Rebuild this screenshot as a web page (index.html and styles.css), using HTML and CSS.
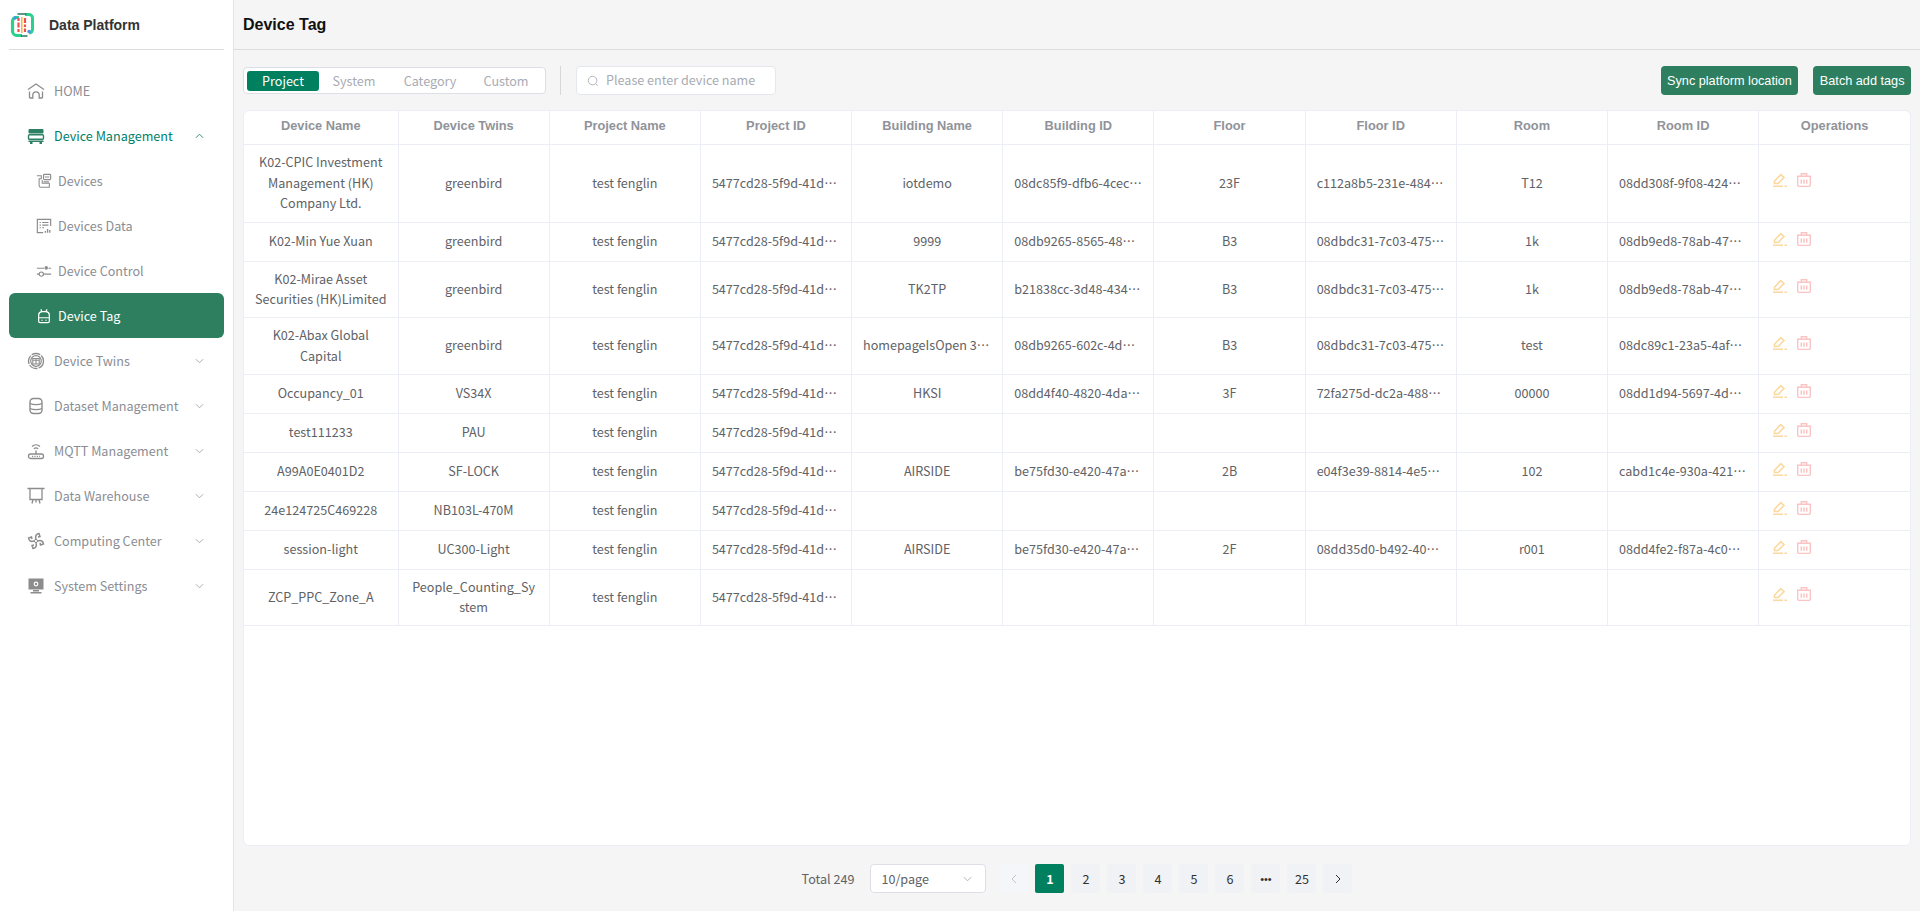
FILE: index.html
```html
<!DOCTYPE html>
<html lang="en">
<head>
    <meta charset="UTF-8">
    <title>Device Tag</title>
    <link rel="stylesheet" href="styles.css">
</head>
<body>
    <svg class="sprite" xmlns="http://www.w3.org/2000/svg">
        <symbol id="i-edit" viewBox="0 0 14 14">
            <path d="M1.5 8.3 7.8 1.6l3.2 2.9-5.9 6H1.5z" fill="none" stroke="currentColor" stroke-width="1.6"/>
            <path d="M0 13.2h10M11.5 13.2H14" stroke="currentColor" stroke-width="1.4"/>
        </symbol>
        <symbol id="i-del" viewBox="0 0 14 14">
            <path d="M.7 3.2h12.6V12a1.4 1.4 0 0 1-1.4 1.4H2.1A1.4 1.4 0 0 1 .7 12z" fill="none" stroke="currentColor" stroke-width="1.4"/>
            <path d="M4.3 3.2V.8h5.4v2.4" fill="none" stroke="currentColor" stroke-width="1.4"/>
            <path d="M4.3 6.5v4.2M7 6.5v4.2M9.7 6.5v4.2" stroke="currentColor" stroke-width="1.5"/>
        </symbol>
    </svg>

    <div class="app">
        <aside class="sidebar">
            <div class="brand">
                <svg class="logo" viewBox="0 0 24 24">
                    <path d="M9 4.5H6A3.5 3.5 0 0 0 2.5 8v10A4.500 4.500 0 0 0 7 22.5h5" fill="none" stroke="#2bd08d" stroke-width="3.2"/>
                    <path d="M15 1.5h4A3.500 3.500 0 0 1 22.5 5v11a4 4 0 0 1-3.5 4" fill="none" stroke="#2bd08d" stroke-width="3"/>
                    <path d="M7.5 1h9M11 23h6.5" stroke="#24795f" stroke-width="1.6"/>
                    <path d="M8.5 5v3M8.5 9.5v5M8.5 16v3M15 5v5M15 11.5V14M15 15.5V19" stroke="#ef4f4f" stroke-width="2.2"/>
                    <path d="M11.8 4v16" stroke="#f6b73c" stroke-width="1.5"/>
                    <circle cx="5" cy="5" r="1.7" fill="#4a90f0"/>
                    <circle cx="19" cy="18.5" r="1.7" fill="#4a90f0"/>
                </svg>
                <span class="brand-name">Data Platform</span>
            </div>
            <nav class="menu">
                <a class="menu-item">
                    <svg class="menu-icon" viewBox="0 0 18 18"><path d="M1 7.5 9 2l8 5.5" fill="none" stroke="currentColor" stroke-width="1.2"/><path d="M2.5 16V9.5M15.5 16V9.5M2.5 16h3.3v-3a3.2 3.2 0 0 1 6.4 0v3h3.3" fill="none" stroke="currentColor" stroke-width="1.3"/></svg>
                    <span>HOME</span>
                </a>
                <a class="menu-item is-open">
                    <svg class="menu-icon" viewBox="0 0 18 18"><rect x="1.5" y="2" width="15" height="4.5" rx="1" fill="currentColor"/><rect x="1.5" y="7.8" width="15" height="4.5" rx="1" fill="none" stroke="currentColor" stroke-width="1.4"/><path d="M1.5 13.5h15V15h-15zM3 15h2.5v2H3zM12.5 15H15v2h-2.5z" fill="currentColor"/></svg>
                    <span>Device Management</span>
                    <svg class="chevron" viewBox="0 0 10 6"><path d="M1 5 5 1l4 4" fill="none" stroke="currentColor"/></svg>
                </a>
                <a class="menu-item sub">
                    <svg class="menu-icon" viewBox="0 0 18 18"><path d="M1 3h5v3.5H3.5V14a2 2 0 0 0 2 2H15v-4.500H7V8" fill="none" stroke="currentColor" stroke-width="1.2"/><rect x="8.5" y="1.5" width="8" height="6" rx="1" fill="none" stroke="currentColor" stroke-width="1.3"/><path d="M10 4.5h5M8.5 10h6" stroke="currentColor" stroke-width="1.2"/></svg>
                    <span>Devices</span>
                </a>
                <a class="menu-item sub">
                    <svg class="menu-icon" viewBox="0 0 18 18"><path d="M8 16.5H1.5v-15h15V9" fill="none" stroke="currentColor" stroke-width="1.3"/><path d="M4 5h1.5M7 5h7M4 8h1.5M7 8h7M4 11h1.5M7 11h2" stroke="currentColor" stroke-width="1.2"/><path d="M10.5 16.5v-2M13 16.5v-4M15.5 16.5v-3" stroke="currentColor" stroke-width="1.5"/></svg>
                    <span>Devices Data</span>
                </a>
                <a class="menu-item sub">
                    <svg class="menu-icon" viewBox="0 0 18 18"><path d="M1 6h8M14 6h3M1 12.5h2.500M9 12.5h8" stroke="currentColor" stroke-width="1.2"/><circle cx="11.5" cy="5.5" r="2" fill="currentColor"/><circle cx="6" cy="12.5" r="2.4" fill="none" stroke="currentColor" stroke-width="1.3"/></svg>
                    <span>Device Control</span>
                </a>
                <a class="menu-item sub is-active">
                    <svg class="menu-icon" viewBox="0 0 18 18"><path d="M3 7.5A4 4 0 0 1 7 4h4a4 4 0 0 1 4 3.5V15a1.5 1.5 0 0 1-1.5 1.5h-9A1.5 1.5 0 0 1 3 15z" fill="none" stroke="currentColor" stroke-width="1.4"/><path d="M3 11h12M6.5 4l-1-2.500M11 4l1.5-2.500M6 13.800h1.500M10.500 13.800H12" stroke="currentColor" stroke-width="1.3"/></svg>
                    <span>Device Tag</span>
                </a>
                <a class="menu-item">
                    <svg class="menu-icon" viewBox="0 0 18 18"><circle cx="9" cy="9" r="7.5" fill="none" stroke="currentColor" stroke-width="1.3" stroke-dasharray="9 1.2"/><circle cx="9" cy="9" r="5.3" fill="none" stroke="currentColor" stroke-width="1.2"/><path d="M5.8 6.5h6.4V12H5.800zM9 6.5V12M5.8 8.3h6.4" fill="none" stroke="currentColor" stroke-width="1.1"/></svg>
                    <span>Device Twins</span>
                    <svg class="chevron" viewBox="0 0 10 6"><path d="m1 1 4 4 4-4" fill="none" stroke="currentColor"/></svg>
                </a>
                <a class="menu-item">
                    <svg class="menu-icon" viewBox="0 0 18 18"><rect x="3" y="1.5" width="12" height="15" rx="3.5" fill="none" stroke="currentColor" stroke-width="1.4"/><path d="M3 6.5c3 1.5 9 1.5 12 0M3 11.5c3 1.500 9 1.500 12 0" fill="none" stroke="currentColor" stroke-width="1.3"/></svg>
                    <span>Dataset Management</span>
                    <svg class="chevron" viewBox="0 0 10 6"><path d="m1 1 4 4 4-4" fill="none" stroke="currentColor"/></svg>
                </a>
                <a class="menu-item">
                    <svg class="menu-icon" viewBox="0 0 18 18"><path d="M5 4.5a6 6 0 0 1 8 0M6.8 6.8a3.5 3.5 0 0 1 4.4 0" fill="none" stroke="currentColor" stroke-width="1.2"/><path d="M8.3 8.500h1.400V12H8.300z" fill="currentColor"/><rect x="1.5" y="12" width="15" height="4.5" rx="2" fill="none" stroke="currentColor" stroke-width="1.3"/><path d="M5 14.3h8" stroke="currentColor" stroke-width="1.2" stroke-dasharray="1.2 1.2"/></svg>
                    <span>MQTT Management</span>
                    <svg class="chevron" viewBox="0 0 10 6"><path d="m1 1 4 4 4-4" fill="none" stroke="currentColor"/></svg>
                </a>
                <a class="menu-item">
                    <svg class="menu-icon" viewBox="0 0 18 18"><path d="M.5 1.5h17M3 1.5v11h12v-11M6 12.5l-1 4M12 12.5l1 4M9 12.5v3" fill="none" stroke="currentColor" stroke-width="1.3"/></svg>
                    <span>Data Warehouse</span>
                    <svg class="chevron" viewBox="0 0 10 6"><path d="m1 1 4 4 4-4" fill="none" stroke="currentColor"/></svg>
                </a>
                <a class="menu-item">
                    <svg class="menu-icon" viewBox="0 0 18 18"><path d="M9 7C8 4 9 2 12 1.5l1 3-2 .5M11 9c3-1 5 0 5.5 3l-3 1-.5-2M9 11c1 3 0 5-3 5.5l-1-3 2-.5M7 9C4 10 2 9 1.5 6l3-1 .5 2" fill="none" stroke="currentColor" stroke-width="1.5"/><circle cx="9" cy="9" r="1.6" fill="none" stroke="currentColor"/></svg>
                    <span>Computing Center</span>
                    <svg class="chevron" viewBox="0 0 10 6"><path d="m1 1 4 4 4-4" fill="none" stroke="currentColor"/></svg>
                </a>
                <a class="menu-item">
                    <svg class="menu-icon" viewBox="0 0 18 18"><path d="M1.5 1.5h15v11h-15z" fill="currentColor"/><circle cx="9" cy="7" r="1.8" fill="none" stroke="#fff" stroke-width="1.2"/><path d="M6 13h6v1.5H6zM3.5 15h11v1.5h-11z" fill="currentColor"/></svg>
                    <span>System Settings</span>
                    <svg class="chevron" viewBox="0 0 10 6"><path d="m1 1 4 4 4-4" fill="none" stroke="currentColor"/></svg>
                </a>
            </nav>
        </aside>

        <main class="main">
            <header class="topbar"><h1>Device Tag</h1></header>

            <div class="toolbar">
                <div class="tabs">
                    <span class="tab is-active">Project</span>
                    <span class="tab">System</span>
                    <span class="tab">Category</span>
                    <span class="tab">Custom</span>
                </div>
                <span class="divider"></span>
                <div class="search">
                    <svg viewBox="0 0 14 14"><circle cx="6.5" cy="6.5" r="5" fill="none" stroke="currentColor"/><path d="m10 10 2.5 2.5" stroke="currentColor"/></svg>
                    <span class="placeholder">Please enter device name</span>
                </div>
                <div class="actions">
                    <button class="btn" type="button">Sync platform location</button>
                    <button class="btn" type="button">Batch add tags</button>
                </div>
            </div>

            <div class="table-card">
                <table class="tag-table">
                    <colgroup><col class="col-first"></colgroup>
                    <thead>
                        <tr>
                            <th>Device Name</th><th>Device Twins</th><th>Project Name</th><th>Project ID</th><th>Building Name</th><th>Building ID</th><th>Floor</th><th>Floor ID</th><th>Room</th><th>Room ID</th><th>Operations</th>
                        </tr>
                    </thead>
                    <tbody>
                        <tr class="row-tall">
                            <td>K02-CPIC Investment Management (HK) Company Ltd.</td><td>greenbird</td><td>test fenglin</td><td><div class="ell">5477cd28-5f9d-41d3-8a15-6c2e90b7d104</div></td><td><div class="ell">iotdemo</div></td><td><div class="ell">08dc85f9-dfb6-4cec-8a11-52cf01e7a390</div></td><td>23F</td><td><div class="ell">c112a8b5-231e-4842-b7d0-93ac14e6f027</div></td><td>T12</td><td><div class="ell">08dd308f-9f08-4242-8c3e-71b06d2fa418</div></td>
                            <td class="ops"><svg class="op op-edit"><use href="#i-edit"/></svg><svg class="op op-del"><use href="#i-del"/></svg></td>
                        </tr>
                        <tr>
                            <td>K02-Min Yue Xuan</td><td>greenbird</td><td>test fenglin</td><td><div class="ell">5477cd28-5f9d-41d3-8a15-6c2e90b7d104</div></td><td><div class="ell">9999</div></td><td><div class="ell">08db9265-8565-48d1-8f40-2a7d13c9b650</div></td><td>B3</td><td><div class="ell">08dbdc31-7c03-4750-8d92-6e0fb14a37c8</div></td><td>1k</td><td><div class="ell">08db9ed8-78ab-47c5-81f6-0d3e92ab6c17</div></td>
                            <td class="ops"><svg class="op op-edit"><use href="#i-edit"/></svg><svg class="op op-del"><use href="#i-del"/></svg></td>
                        </tr>
                        <tr>
                            <td>K02-Mirae Asset Securities (HK)Limited</td><td>greenbird</td><td>test fenglin</td><td><div class="ell">5477cd28-5f9d-41d3-8a15-6c2e90b7d104</div></td><td><div class="ell">TK2TP</div></td><td><div class="ell">b21838cc-3d48-4341-a0e7-58fd26c1b903</div></td><td>B3</td><td><div class="ell">08dbdc31-7c03-4750-8d92-6e0fb14a37c8</div></td><td>1k</td><td><div class="ell">08db9ed8-78ab-47c5-81f6-0d3e92ab6c17</div></td>
                            <td class="ops"><svg class="op op-edit"><use href="#i-edit"/></svg><svg class="op op-del"><use href="#i-del"/></svg></td>
                        </tr>
                        <tr>
                            <td>K02-Abax Global Capital</td><td>greenbird</td><td>test fenglin</td><td><div class="ell">5477cd28-5f9d-41d3-8a15-6c2e90b7d104</div></td><td><div class="ell">homepageIsOpen 3 building</div></td><td><div class="ell">08db9265-602c-4db7-8b36-c4e07a19d25f</div></td><td>B3</td><td><div class="ell">08dbdc31-7c03-4750-8d92-6e0fb14a37c8</div></td><td>test</td><td><div class="ell">08dc89c1-23a5-4af0-96d2-1b7e30c8f465</div></td>
                            <td class="ops"><svg class="op op-edit"><use href="#i-edit"/></svg><svg class="op op-del"><use href="#i-del"/></svg></td>
                        </tr>
                        <tr>
                            <td>Occupancy_01</td><td>VS34X</td><td>test fenglin</td><td><div class="ell">5477cd28-5f9d-41d3-8a15-6c2e90b7d104</div></td><td><div class="ell">HKSI</div></td><td><div class="ell">08dd4f40-4820-4da6-8e73-f1290cb5a684</div></td><td>3F</td><td><div class="ell">72fa275d-dc2a-4881-a5c4-07e3d96b1f28</div></td><td>00000</td><td><div class="ell">08dd1d94-5697-4d2b-8c01-e65f3a70b9d2</div></td>
                            <td class="ops"><svg class="op op-edit"><use href="#i-edit"/></svg><svg class="op op-del"><use href="#i-del"/></svg></td>
                        </tr>
                        <tr>
                            <td>test111233</td><td>PAU</td><td>test fenglin</td><td><div class="ell">5477cd28-5f9d-41d3-8a15-6c2e90b7d104</div></td><td></td><td></td><td></td><td></td><td></td><td></td>
                            <td class="ops"><svg class="op op-edit"><use href="#i-edit"/></svg><svg class="op op-del"><use href="#i-del"/></svg></td>
                        </tr>
                        <tr>
                            <td>A99A0E0401D2</td><td>SF-LOCK</td><td>test fenglin</td><td><div class="ell">5477cd28-5f9d-41d3-8a15-6c2e90b7d104</div></td><td><div class="ell">AIRSIDE</div></td><td><div class="ell">be75fd30-e420-47ac-93b8-d10f6a2c7e45</div></td><td>2B</td><td><div class="ell">e04f3e39-8814-4e5a-b16c-3790cd28fa61</div></td><td>102</td><td><div class="ell">cabd1c4e-930a-4213-8fe7-a264b05d19c3</div></td>
                            <td class="ops"><svg class="op op-edit"><use href="#i-edit"/></svg><svg class="op op-del"><use href="#i-del"/></svg></td>
                        </tr>
                        <tr>
                            <td>24e124725C469228</td><td>NB103L-470M</td><td>test fenglin</td><td><div class="ell">5477cd28-5f9d-41d3-8a15-6c2e90b7d104</div></td><td></td><td></td><td></td><td></td><td></td><td></td>
                            <td class="ops"><svg class="op op-edit"><use href="#i-edit"/></svg><svg class="op op-del"><use href="#i-del"/></svg></td>
                        </tr>
                        <tr>
                            <td>session-light</td><td>UC300-Light</td><td>test fenglin</td><td><div class="ell">5477cd28-5f9d-41d3-8a15-6c2e90b7d104</div></td><td><div class="ell">AIRSIDE</div></td><td><div class="ell">be75fd30-e420-47ac-93b8-d10f6a2c7e45</div></td><td>2F</td><td><div class="ell">08dd35d0-b492-40d7-86ad-5c1e29073bd6</div></td><td>r001</td><td><div class="ell">08dd4fe2-f87a-4c03-9b15-e8d27f60a1c4</div></td>
                            <td class="ops"><svg class="op op-edit"><use href="#i-edit"/></svg><svg class="op op-del"><use href="#i-del"/></svg></td>
                        </tr>
                        <tr>
                            <td>ZCP_PPC_Zone_A</td><td>People_Counting_System</td><td>test fenglin</td><td><div class="ell">5477cd28-5f9d-41d3-8a15-6c2e90b7d104</div></td><td></td><td></td><td></td><td></td><td></td><td></td>
                            <td class="ops"><svg class="op op-edit"><use href="#i-edit"/></svg><svg class="op op-del"><use href="#i-del"/></svg></td>
                        </tr>
                    </tbody>
                </table>
            </div>

            <footer class="pager">
                <span class="total">Total 249</span>
                <div class="page-size">
                    <span>10/page</span>
                    <svg class="chevron" viewBox="0 0 10 6"><path d="m1 1 4 4 4-4" fill="none" stroke="currentColor"/></svg>
                </div>
                <ul class="pages">
                    <li class="is-disabled"><svg viewBox="0 0 6 10"><path d="M5 1 1 5l4 4" fill="none" stroke="currentColor"/></svg></li>
                    <li class="is-active">1</li>
                    <li>2</li>
                    <li>3</li>
                    <li>4</li>
                    <li>5</li>
                    <li>6</li>
                    <li class="more">•••</li>
                    <li>25</li>
                    <li><svg viewBox="0 0 6 10"><path d="m1 1 4 4-4 4" fill="none" stroke="currentColor"/></svg></li>
                </ul>
            </footer>
        </main>
    </div>
</body>
</html>
```

FILE: styles.css
```css
* {
    box-sizing: border-box;
}

html, body {
    height: 100%;
}

body {
    margin: 0;
    font-family: "Noto Sans CJK SC", "Noto Sans", sans-serif;
    font-size: 12.6px;
    color: #606266;
    background-color: #f5f5f5;
    overflow: hidden;
}

.sprite {
    display: none;
}

.app {
    display: flex;
    height: 100%;
}

/* sidebar */
.sidebar {
    width: 234px;
    flex-shrink: 0;
    background-color: #fff;
    border-right: 1px solid #e4e4e4;
    padding: 0 9px;
}

.brand {
    display: flex;
    align-items: center;
    height: 50px;
    border-bottom: 1px solid #dcdcdc;
    padding-left: 1px;
}

.logo {
    width: 24px;
    height: 24px;
    flex-shrink: 0;
}

.brand-name {
    margin-left: 15px;
    font-family: "Liberation Sans", Arial, sans-serif;
    font-size: 14px;
    font-weight: 700;
    color: #333;
}

.menu {
    margin-top: 18px;
}

.menu-item {
    display: flex;
    align-items: center;
    height: 45px;
    padding-left: 18px;
    color: #8a8d94;
    border-radius: 6px;
}

.menu-icon {
    width: 18px;
    height: 18px;
    margin-right: 9px;
    flex-shrink: 0;
    color: #8c8c8c;
}

.menu-item .chevron {
    margin-left: auto;
    margin-right: 20px;
    color: #a0a3a8;
}

.chevron {
    width: 9px;
    height: 6px;
}

.menu-item.is-open {
    color: #00806a;
}

.menu-item.is-open .menu-icon,
.menu-item.is-open .chevron {
    color: #2e8065;
}

.menu-item.sub {
    padding-left: 27px;
}

.menu-item.sub .menu-icon {
    width: 16px;
    height: 16px;
    margin-right: 6px;
}

.menu-item.is-active {
    background-color: #2e7f5f;
    color: #fff;
}

.menu-item.is-active .menu-icon {
    color: #fff;
}

/* main area */
.main {
    flex: 1;
    min-width: 0;
    display: flex;
    flex-direction: column;
}

.topbar {
    height: 50px;
    flex-shrink: 0;
    display: flex;
    align-items: center;
    padding-left: 9px;
    border-bottom: 1px solid #dcdcdc;
}

.topbar h1 {
    margin: 0;
    font-family: "Liberation Sans", Arial, sans-serif;
    font-size: 16px;
    font-weight: 700;
    color: #111;
}

.toolbar {
    display: flex;
    align-items: center;
    height: 29px;
    flex-shrink: 0;
    margin: 16px 9px 15px;
}

.tabs {
    display: flex;
    align-items: center;
    width: 303px;
    height: 27px;
    padding: 0 3px;
    background-color: #fff;
    border: 1px solid #dcdfe6;
    border-radius: 4px;
}

.tab {
    width: 76px;
    height: 20px;
    padding-right: 6px;
    line-height: 20px;
    text-align: center;
    color: #a8abb2;
    border-radius: 3px;
}

.tab:last-child {
    width: 70px;
    padding-right: 0;
}

.tab.is-active {
    width: 72px;
    padding-right: 0;
    background-color: #00805f;
    color: #fff;
}

.divider {
    width: 1px;
    height: 29px;
    margin: 0 15px 0 14px;
    background-color: #d8d8d8;
}

.search {
    display: flex;
    align-items: center;
    width: 200px;
    height: 29px;
    padding-left: 10px;
    background-color: #fff;
    border: 1px solid #e4e7ed;
    border-radius: 4px;
    color: #a8abb2;
}

.search svg {
    width: 12px;
    height: 12px;
    margin-right: 7px;
}

.placeholder {
    padding-bottom: 2px;
}

.actions {
    margin-left: auto;
    display: flex;
    gap: 15px;
}

.btn {
    height: 29px;
    padding: 0 6.5px;
    font-family: "Liberation Sans", Arial, sans-serif;
    font-size: 12.7px;
    color: #fff;
    background-color: #2e7f5f;
    border: none;
    border-radius: 4px;
}

/* table */
.table-card {
    flex: 1;
    min-height: 0;
    margin: 0 9px;
    background-color: #fff;
    border: 1px solid #ebeef5;
    border-radius: 6px;
    overflow: hidden;
}

.tag-table {
    width: 100%;
    table-layout: fixed;
    border-collapse: collapse;
}

.col-first {
    width: 154px;
}

.tag-table th {
    height: 33px;
    padding: 0 10px 3px;
    font-family: "Liberation Sans", Arial, sans-serif;
    font-size: 12.8px;
    font-weight: 700;
    color: #909399;
    border-right: 1px solid #ebeef5;
    border-bottom: 1px solid #ebeef5;
}

.tag-table td {
    height: 39px;
    padding: 7px 12px;
    line-height: 20.8px;
    text-align: center;
    overflow-wrap: anywhere;
    border-right: 1px solid #ebeef5;
    border-bottom: 1px solid #ebeef5;
}

.tag-table td:first-child {
    padding: 7px 10px;
}

.tag-table .row-tall td {
    height: 78px;
}

.tag-table th:last-child,
.tag-table td:last-child {
    border-right: none;
}

/* ids run a little wider than wrapped text before they get cut */
.ell {
    margin: 0 -1px;
    white-space: nowrap;
    overflow: hidden;
    text-overflow: ellipsis;
}

.tag-table td.ops {
    padding: 0 0 6px 14px;
    text-align: left;
    line-height: 0;
}

.op {
    width: 14px;
    height: 14px;
}

.op-edit {
    color: #fbd89f;
    margin-right: 10px;
}

.op-del {
    color: #fbc4c4;
}

/* pagination */
.pager {
    height: 65px;
    flex-shrink: 0;
    display: flex;
    align-items: center;
    justify-content: center;
}

.total {
    margin-right: 16px;
}

.page-size {
    display: flex;
    align-items: center;
    justify-content: space-between;
    width: 116px;
    height: 29px;
    padding: 0 13px 0 10px;
    background-color: #fff;
    border: 1px solid #dcdfe6;
    border-radius: 4px;
}

.page-size .chevron {
    color: #a8abb2;
}

.pages {
    display: flex;
    gap: 7px;
    margin: 0 0 0 13px;
    padding: 0;
    list-style: none;
}

.pages li {
    display: flex;
    align-items: center;
    justify-content: center;
    width: 29px;
    height: 29px;
    background-color: #f0f2f5;
    color: #303133;
    border-radius: 2px;
}

.pages li svg {
    width: 6px;
    height: 10px;
}

.pages li.is-active {
    background-color: #00805f;
    color: #fff;
    font-weight: 700;
}

.pages li.is-disabled {
    background-color: #f5f6f9;
    color: #c0c4cc;
}

.pages li.more {
    font-family: "Liberation Sans", Arial, sans-serif;
    font-size: 11px;
}
```
